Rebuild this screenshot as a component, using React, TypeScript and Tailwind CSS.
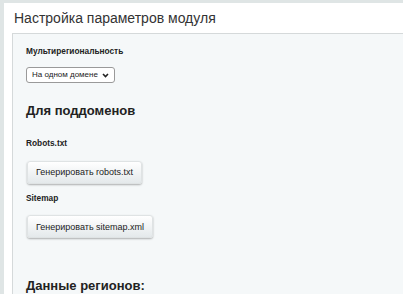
import React from 'react';

const Btn: React.FC<{ label: string }> = ({ label }) => (
  <button className="h-[23px] px-[8px] rounded-[3px] bg-gradient-to-b from-white to-[#e4e9eb] text-[9px] leading-[12px] text-[#222] shadow-[0_1px_2px_rgba(0,0,0,0.3)] border border-[#dfe3e4] [font-family:'Liberation_Sans',Arial,sans-serif]">
    {label}
  </button>
);

export default function App() {
  return (
    <div className="w-[403px] h-[294px] overflow-hidden bg-[#dfe5e5] pt-[3px] pl-[4px] [font-family:'Liberation_Sans',Arial,sans-serif] text-[#222]">
      <div className="bg-white h-full">
        <div className="h-[30px] flex items-center pl-[10px] text-[14px] text-[#333]">
          Настройка параметров модуля
        </div>
        <div className="ml-[8px] h-full bg-[#f5f8f9] border-t border-l border-[#d5d9da] pl-[13px] pt-[11px]">
          <div className="text-[8.3px] leading-[12px] font-bold">Мультирегиональность</div>
          <div className="mt-[10px] h-[16px] w-[89px] bg-white border border-[#9a9a9a] rounded-[3px] flex items-center justify-between pl-[5px] pr-[5px] text-[8px] whitespace-nowrap text-[#222]">
            <span>На одном домене</span>
            <svg width="7" height="5" viewBox="0 0 7 5" fill="none">
              <path d="M1 1l2.5 2.5L6 1" stroke="#222" strokeWidth="1.6" />
            </svg>
          </div>
          <div className="mt-[19px] text-[13px] leading-[18px] font-bold">Для поддоменов</div>
          <div className="mt-[17px] text-[8.3px] leading-[12px] font-bold">Robots.txt</div>
          <div className="mt-[9px] ml-[1px]"><Btn label="Генерировать robots.txt" /></div>
          <div className="mt-[8px] text-[8.3px] leading-[12px] font-bold">Sitemap</div>
          <div className="mt-[9px] ml-[1px]"><Btn label="Генерировать sitemap.xml" /></div>
          <div className="mt-[39px] text-[13px] leading-[18px] font-bold">Данные регионов:</div>
        </div>
      </div>
    </div>
  );
}
